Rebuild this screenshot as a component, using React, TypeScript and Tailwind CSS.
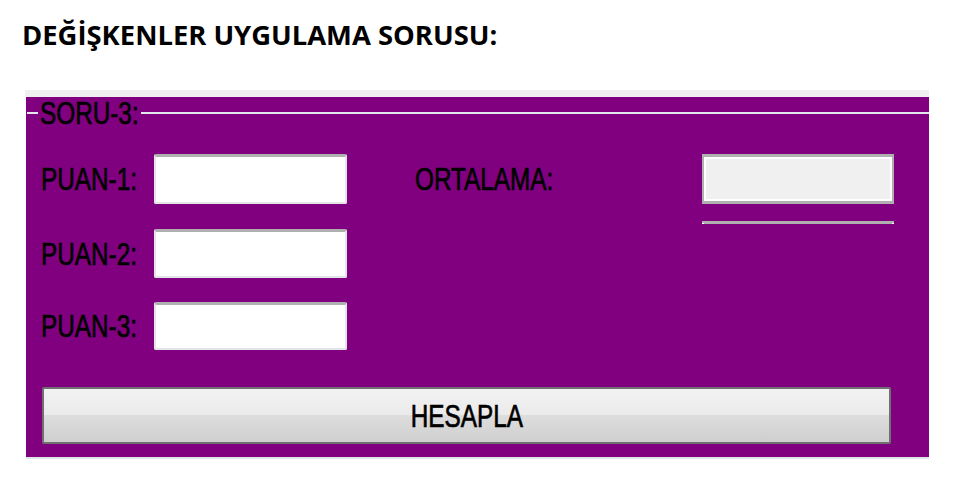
// WinForms-style narrow caption text: Arial metrics squeezed horizontally
function Narrow({ children, width, center }: { children: string; width: number; center?: boolean }) {
  return (
    <span className={`inline-flex shrink-0 ${center ? 'justify-center' : 'justify-start'}`} style={{ width }}>
      <span
        className={`inline-block whitespace-nowrap font-['Liberation_Sans',Arial,sans-serif] text-[32px] leading-[30px] text-black scale-x-[0.76] [-webkit-text-stroke:0.7px_#000] ${
          center ? 'origin-center' : 'origin-left'
        }`}
      >
        {children}
      </span>
    </span>
  )
}

const rows = [
  { label: 'PUAN-1:', h: 'h-[50px]', mt: 'mt-0' },
  { label: 'PUAN-2:', h: 'h-[49px]', mt: 'mt-[25px]' },
  { label: 'PUAN-3:', h: 'h-[48px]', mt: 'mt-[24px]' },
]

export default function App() {
  return (
    <div className="min-h-[483px] w-[957px] bg-white">
      <h1 className="pl-[22px] pt-[17px] font-['Open_Sans',sans-serif] text-[27.4px] font-bold leading-[36px] text-black">
        DEĞİŞKENLER UYGULAMA SORUSU:
      </h1>

      <div className="ml-[25px] mt-[37px] w-[904px]">
        <div className="h-[7px] bg-[#f0f0f0]" />
        <div className="ml-[1px] h-[362px] border-b-2 border-[#dde4ea] bg-[#800080] pl-[1px]">
          {/* group box caption */}
          <div className="flex items-center pt-[1px]">
            <div className="h-[2px] w-[11px] bg-[#e4e8ee]" />
            <span className="ml-[2px] flex w-[101px]">
              <Narrow width={101}>SORU-3:</Narrow>
            </span>
            <div className="h-[2px] flex-1 bg-[#e4e8ee]" />
          </div>

          <div className="mt-[26px] flex">
            <div className="flex w-[388px] flex-col pl-[14px]">
              {rows.map((r) => (
                <div key={r.label} className={`flex items-center ${r.mt}`}>
                  <Narrow width={113}>{r.label}</Narrow>
                  <div
                    className={`${r.h} w-[193px] rounded-[2px] border-x-2 border-t-[3px] border-b-2 border-x-[#e3e3e8] border-t-[#b0b0b0] border-b-[#e3e3e8] bg-white`}
                  />
                </div>
              ))}
            </div>

            <div className="flex">
              <div className="flex h-[50px] items-center">
                <Narrow width={287}>ORTALAMA:</Narrow>
              </div>
              <div className="flex flex-col">
                <div className="h-[50px] w-[192px] border-x-2 border-t-[3px] border-b-[3px] border-[#b0b0b0] bg-[#f0f0f0] shadow-[inset_0_0_0_2px_#ffffff]" />
                <div className="mt-[17px] flex h-[3px] w-[192px] items-end bg-[#b0b0b0]">
                  <div className="h-[1px] w-[2px] bg-white" />
                  <div className="flex-1" />
                  <div className="h-[1px] w-[2px] bg-white" />
                </div>
              </div>
            </div>
          </div>

          <div className="ml-[15px] mt-[37px] w-[849px] rounded-[2px] border-2 border-[#707070] shadow-[inset_0_0_0_2px_#f7f7f7]">
            <div className="flex h-[53px] items-center justify-center bg-[linear-gradient(#f2f2f2,#ebebeb_48%,#dddddd_50%,#cfcfcf)]">
              <Narrow width={140} center>
                HESAPLA
              </Narrow>
            </div>
          </div>
        </div>
      </div>
    </div>
  )
}
